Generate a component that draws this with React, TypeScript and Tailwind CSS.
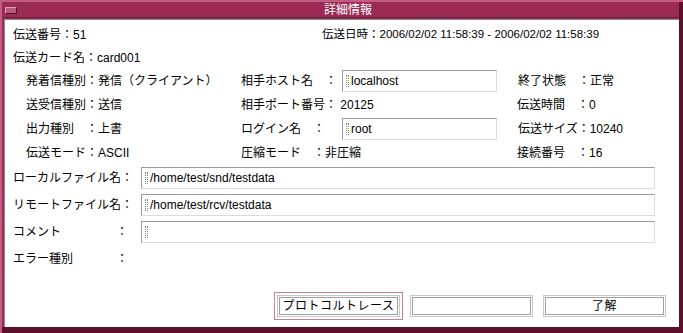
import React from "react";

const font = {
  fontFamily: "'Liberation Sans', 'Noto Sans CJK JP', sans-serif",
};

function Caret() {
  return <span className="inline-block w-[3px] h-[12px] border-x border-dotted border-[#888] mr-[2px] align-middle" />;
}

function Field({ value, className }: { value: string; className: string }) {
  return (
    <div
      className={
        "h-[22px] flex items-center bg-white border border-t-[#9a9a9a] border-l-[#9a9a9a] border-r-[#dcdcdc] border-b-[#dcdcdc] pl-[3px] text-[12px] " +
        className
      }
    >
      <Caret />
      <span>{value}</span>
    </div>
  );
}

function Btn({ label, focus }: { label: string; focus?: boolean }) {
  return (
    <div className={"p-[2px] " + (focus ? "border border-[#c8809c]" : "border border-transparent")}>
      <div className="border border-[#c8c8c8] p-[1px]">
        <div className="w-[119px] h-[18px] border border-[#a0a0a0] flex items-center justify-center text-[12px] tracking-[0.5px] whitespace-nowrap">
          {label}
        </div>
      </div>
    </div>
  );
}

export default function App() {
  return (
    <div style={font} className="w-[683px] h-[333px] bg-[#9c2b56] text-black overflow-hidden">
      <div className="h-full border-l-[2px] border-t-[2px] border-[#c25c82]">
        <div className="h-full flex flex-col border-r-[4px] border-b-[6px] border-[#5c0f2c] pl-[1px] pt-[1px]">
          {/* title bar */}
          <div className="h-[15px] flex items-center bg-[#9b2a55] border-b border-[#6a1a3a]">
            <div className="ml-[2px] w-[12px] h-[7px] bg-[#b85a7e] border border-t-[#e0a0b8] border-l-[#e0a0b8] border-b-[#5a0f2a] border-r-[#5a0f2a]" />
            <div className="flex-1 text-center text-white text-[12px] leading-none">詳細情報</div>
          </div>
          <div className="flex-1 bg-white border-l border-t border-[#8a8a8a] ml-[1px] mt-[1px] pl-[8px] pr-[10px] flex flex-col">
            <div className="h-[24px] mt-[3px] flex items-center text-[12px]">
              <div className="w-[309px]">伝送番号：51</div>
              <div className="text-[11.5px]">伝送日時：2006/02/02 11:58:39 - 2006/02/02 11:58:39</div>
            </div>
            <div className="h-[22px] flex items-center text-[12px]">伝送カード名：card001</div>

            <div className="h-[24px] flex items-center text-[12px] pl-[13px]">
              <div className="w-[215px]">発着信種別：発信（クライアント）</div>
              <div className="w-[101px]">相手ホスト名　：</div>
              <Field value="localhost" className="w-[155px]" />
              <div className="ml-[21px]">終了状態　：正常</div>
            </div>
            <div className="h-[24px] flex items-center text-[12px] pl-[13px]">
              <div className="w-[215px]">送受信種別：送信</div>
              <div className="w-[276px]">相手ポート番号： 20125</div>
              <div>伝送時間　：0</div>
            </div>
            <div className="h-[24px] flex items-center text-[12px] pl-[13px]">
              <div className="w-[215px]">出力種別　：上書</div>
              <div className="w-[101px]">ログイン名　：</div>
              <Field value="root" className="w-[155px]" />
              <div className="ml-[21px]">伝送サイズ：10240</div>
            </div>
            <div className="h-[23px] flex items-center text-[12px] pl-[13px]">
              <div className="w-[215px]">伝送モード：ASCII</div>
              <div className="w-[276px]">圧縮モード　：非圧縮</div>
              <div>接続番号　：16</div>
            </div>

            <div className="h-[27px] flex items-center text-[12px] pr-[14px]">
              <div className="w-[128px]">ローカルファイル名：</div>
              <Field value="/home/test/snd/testdata" className="flex-1" />
            </div>
            <div className="h-[27px] flex items-center text-[12px] pr-[14px]">
              <div className="w-[128px]">リモートファイル名：</div>
              <Field value="/home/test/rcv/testdata" className="flex-1" />
            </div>
            <div className="h-[27px] flex items-center text-[12px] pr-[14px]">
              <div className="w-[128px] flex">
                <span className="w-[103px]">コメント</span>
                <span>：</span>
              </div>
              <Field value="" className="flex-1" />
            </div>
            <div className="h-[27px] flex items-center text-[12px]">
              <div className="w-[128px] flex">
                <span className="w-[103px]">エラー種別</span>
                <span>：</span>
              </div>
            </div>

            <div className="mt-auto mb-[7px] flex justify-end items-center gap-[4px]">
              <Btn label="プロトコルトレース" focus />
              <Btn label="" />
              <Btn label="了解" />
            </div>
          </div>
        </div>
      </div>
    </div>
  );
}
